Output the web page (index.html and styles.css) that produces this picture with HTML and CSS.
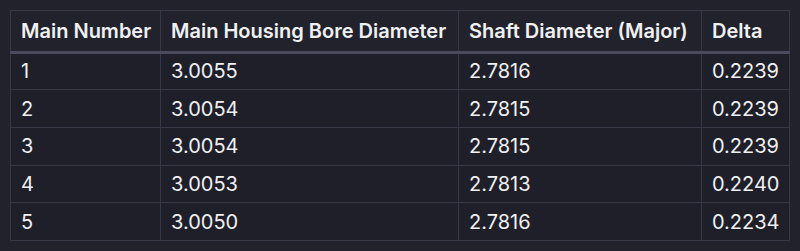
FILE: index.html
```html
<!DOCTYPE html>
<html>
<head>
<meta charset="utf-8">
<link rel="stylesheet" href="styles.css">
</head>
<body>
<div class="wrap">
<table class="grid">
<thead>
<tr><th class="c1">Main Number</th><th class="c2">Main Housing Bore Diameter</th><th class="c3">Shaft Diameter (Major)</th><th class="c4">Delta</th></tr>
</thead>
<tbody>
<tr><td>1</td><td>3.0055</td><td>2.7816</td><td>0.2239</td></tr>
<tr><td>2</td><td>3.0054</td><td>2.7815</td><td>0.2239</td></tr>
<tr><td>3</td><td>3.0054</td><td>2.7815</td><td>0.2239</td></tr>
<tr><td>4</td><td>3.0053</td><td>2.7813</td><td>0.2240</td></tr>
<tr><td>5</td><td>3.0050</td><td>2.7816</td><td>0.2234</td></tr>
</tbody>
</table>
</div>
</body>
</html>
```
FILE: styles.css
```css
html, body {
  margin: 0;
  background: #22222d;
}
.wrap {
  padding: 10px;
}
.grid {
  border-collapse: collapse;
  table-layout: fixed;
  width: 779px;
  font-family: Inter, "Noto Sans", sans-serif;
  font-size: 20px;
  color: #f0f0f2;
  background: #1f1f2a;
  border: 1px solid #383846;
}
.grid th, .grid td {
  box-sizing: border-box;
  border: 1px solid #383846;
  padding: 0 4px 0 10px;
  text-align: left;
  white-space: nowrap;
  overflow: hidden;
}
.grid th {
  font-weight: 600;
  height: 41.5px;
  border-bottom: 3px solid #4a4a5c;
  background: #22222d;
}
.grid td {
  height: 37.7px;
}
.c1 { width: 150px; }
.c2 { width: 298px; }
.c3 { width: 243px; }
.c4 { width: 88px; }
```
